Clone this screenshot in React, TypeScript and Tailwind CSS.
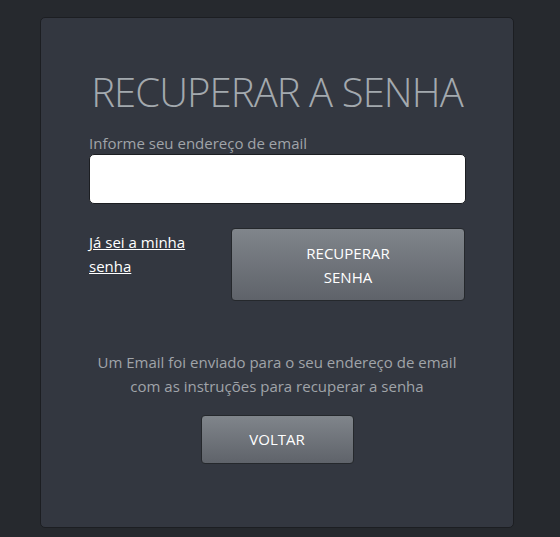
import React from "react";

const font = { fontFamily: '"Open Sans", "Noto Sans", sans-serif' };

export default function App() {
  return (
    <div className="min-h-[537px] w-full bg-[#26292e] px-10 pt-[17px] pb-[9px]" style={font}>
      {/* Card */}
      <div className="h-[511px] w-[474px] rounded-[5px] border border-[#1c1e22] bg-[#333740] px-12 pt-[50px]">
        <h1 className="text-center text-[40px] font-light leading-[48px] tracking-[-0.9px] text-[#a3a9ae]">
          RECUPERAR A SENHA
        </h1>

        <label className="mt-[17px] block text-[15px] leading-[20px] text-[#a0a4a9]">
          Informe seu endereço de email
        </label>
        <input
          type="email"
          className="mt-[1px] block h-[50px] w-[377px] rounded-[5px] border border-[#1c1e22] bg-white px-3 text-[15px] text-black outline-none"
        />

        <div className="mt-[24px] flex items-start justify-between">
          <a href="#" className="mt-[2px] w-[125px] text-[15px] leading-[24px] text-white underline">
            Já sei a minha senha
          </a>
          <button className="h-[73px] w-[234px] rounded-[4px] border border-[#25282c] bg-gradient-to-b from-[#80858b] to-[#5f636a] px-16 text-[15px] leading-[24px] text-white">
            RECUPERAR SENHA
          </button>
        </div>

        <p className="mt-[49px] text-center text-[15px] leading-[24px] text-[#a0a4a9]">
          Um Email foi enviado para o seu endereço de email com as instruções para recuperar a senha
        </p>

        <div className="mt-[17px] flex justify-center">
          <button className="h-[49px] w-[153px] rounded-[4px] border border-[#25282c] bg-gradient-to-b from-[#80858b] to-[#5f636a] text-[15px] text-white">
            VOLTAR
          </button>
        </div>
      </div>
    </div>
  );
}
